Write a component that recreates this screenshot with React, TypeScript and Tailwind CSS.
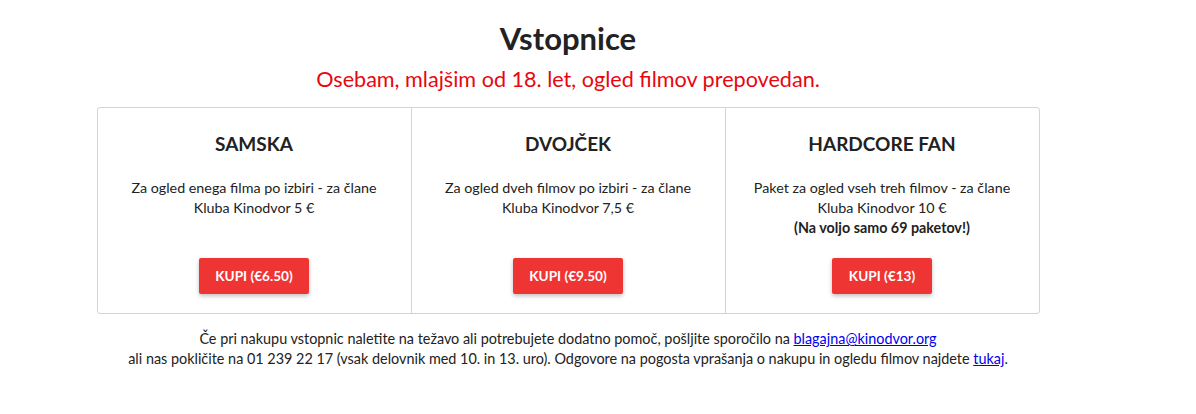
import React from "react";

const cards = [
  {
    title: "SAMSKA",
    desc: ["Za ogled enega filma po izbiri - za člane", "Kluba Kinodvor 5 €"],
    bold: null as string | null,
    btn: "KUPI (€6.50)",
  },
  {
    title: "DVOJČEK",
    desc: ["Za ogled dveh filmov po izbiri - za člane", "Kluba Kinodvor 7,5 €"],
    bold: null as string | null,
    btn: "KUPI (€9.50)",
  },
  {
    title: "HARDCORE FAN",
    desc: ["Paket za ogled vseh treh filmov - za člane", "Kluba Kinodvor 10 €"],
    bold: "(Na voljo samo 69 paketov!)",
    btn: "KUPI (€13)",
  },
];

export default function App() {
  return (
    <div className="w-[1196px] h-[414px] bg-white">
      <div
        className="w-[1136px] text-[#222] flex flex-col items-center"
        style={{ fontFamily: "Lato, 'Noto Sans', sans-serif" }}
      >
        <h1 className="mt-[20px] text-[31px] leading-[37px] font-bold text-[#222]">Vstopnice</h1>
        <p className="mt-[9px] text-[21.6px] leading-[26px] text-[#e8070f]">
          Osebam, mlajšim od 18. let, ogled filmov prepovedan.
        </p>
        <div className="mt-[15px] w-[943px] flex border border-[#d4d4d4] rounded-[3px] divide-x divide-[#d4d4d4]">
          {cards.map((c) => (
            <div key={c.title} className="flex-1 flex flex-col items-center pt-[24px] pb-[19px] text-center">
              <h2 className="text-[19px] leading-[23px] font-bold text-[#222]">{c.title}</h2>
              <div className="mt-[23px] flex-1 pb-[20px] text-[14.3px] leading-[20px] text-[#222]">
                {c.desc.map((d) => (
                  <div key={d}>{d}</div>
                ))}
                {c.bold && <div className="font-bold">{c.bold}</div>}
              </div>
              <button className="h-[36px] px-[16.5px] bg-[#ef3434] text-white text-[13.6px] font-bold rounded-[2px] shadow-[0_2px_4px_rgba(0,0,0,0.25)]">
                {c.btn}
              </button>
            </div>
          ))}
        </div>
        <div className="mt-[15px] text-[14.4px] leading-[20px] text-center text-[#222]">
          <div>
            Če pri nakupu vstopnic naletite na težavo ali potrebujete dodatno pomoč, pošljite sporočilo na{" "}
            <a href="#" className="text-[#0000ee] underline">
              blagajna@kinodvor.org
            </a>
          </div>
          <div>
            ali nas pokličite na 01 239 22 17 (vsak delovnik med 10. in 13. uro). Odgovore na pogosta vprašanja o nakupu
            in ogledu filmov najdete{" "}
            <a href="#" className="text-[#0000ee] underline">
              tukaj
            </a>
            .
          </div>
        </div>
      </div>
    </div>
  );
}
